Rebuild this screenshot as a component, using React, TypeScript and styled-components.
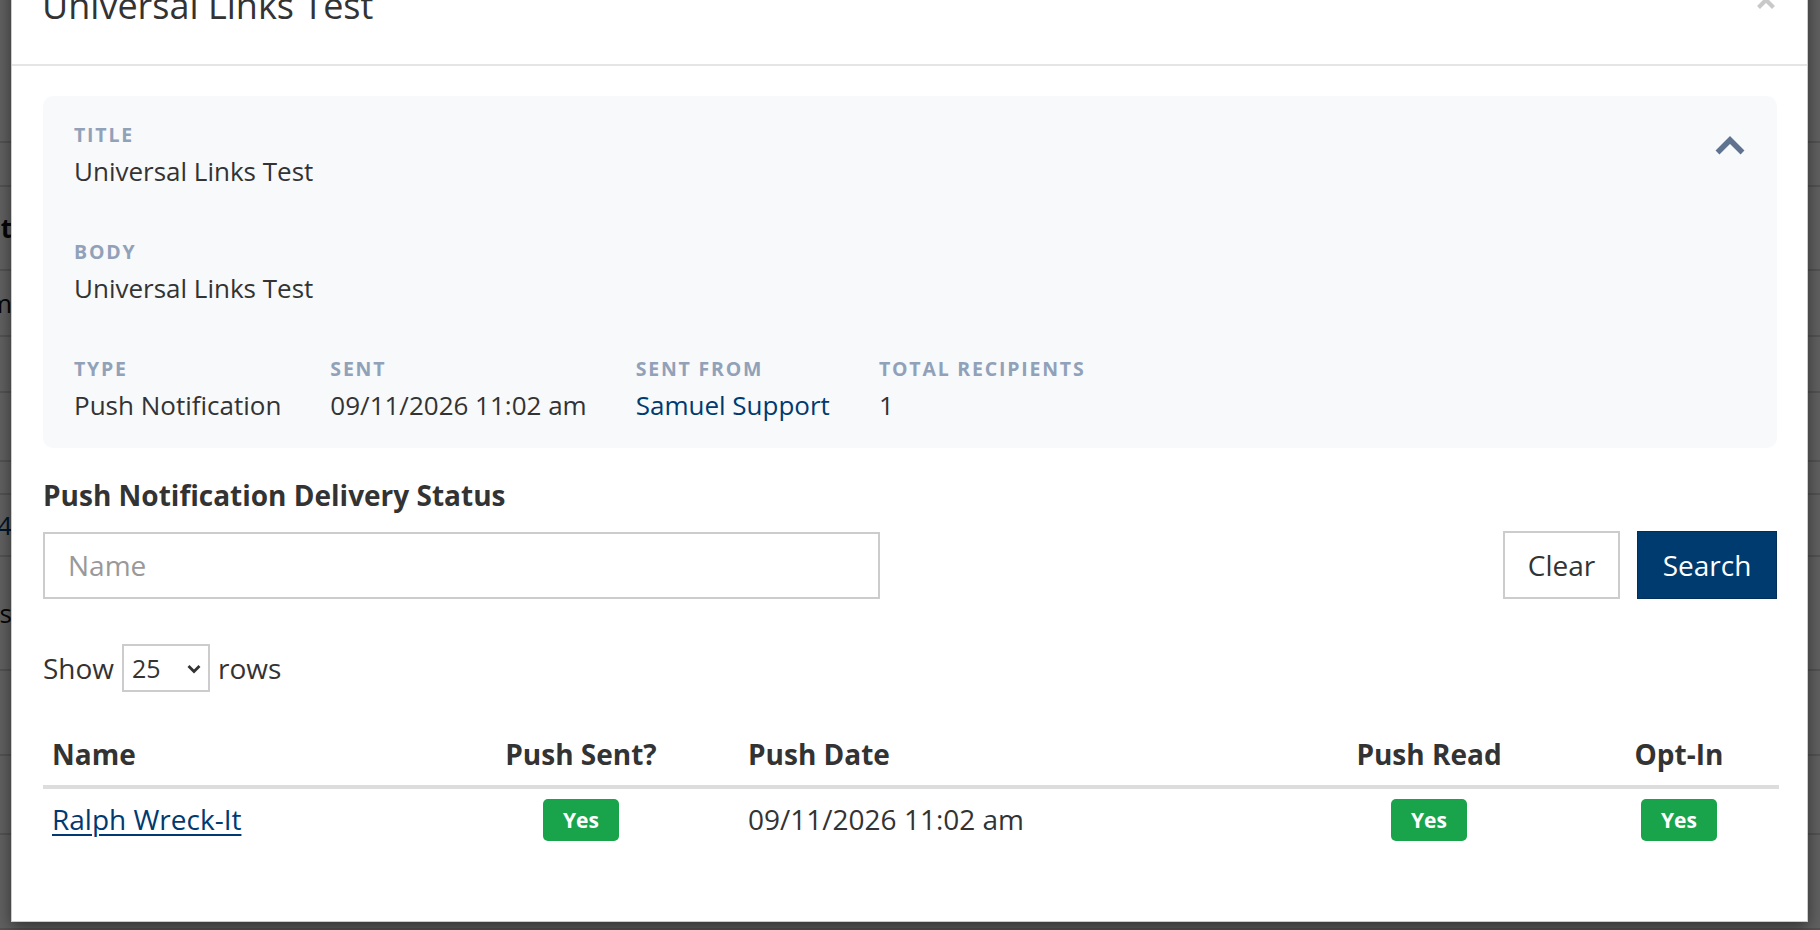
import styled, { createGlobalStyle } from 'styled-components';

const GlobalStyle = createGlobalStyle`
    html, body {
        margin: 0;
        padding: 0;
        overflow: hidden;
    }
    body {
        font-family: "Open Sans", "Liberation Sans", sans-serif;
        color: #333;
    }
    * {
        box-sizing: border-box;
    }
`;

// rows of the page that sits behind the modal backdrop
const behindRows = [
    { h: 143, text: '' },
    { h: 44, text: '' },
    { h: 84, text: 'Format', bold: true },
    { h: 66, text: 'Form' },
    { h: 56, text: '' },
    { h: 69, text: '' },
    { h: 33, text: '' },
    { h: 62, text: '2024', link: true },
    { h: 114, text: 'Yes' },
    { h: 85, text: '' },
    { h: 79, text: '' },
    { h: 95, text: '' },
];

const deliveries = [
    { name: 'Ralph Wreck-It', sent: true, date: '09/11/2026 11:02 am', read: true, optIn: true },
];

const ChevronUp = () => (
    <svg width="30" height="20" viewBox="0 0 30 20">
        <path d="M2.5 17.5 L15 5 L27.5 17.5" fill="none" stroke="#5f7390" strokeWidth="5.5" strokeLinejoin="miter" />
    </svg>
);

const ChevronDown = () => (
    <svg width="14" height="10" viewBox="0 0 14 10">
        <path d="M1.5 2 L7 7.5 L12.5 2" fill="none" stroke="#333" strokeWidth="2.8" />
    </svg>
);

const CloseIcon = () => (
    <svg width="18" height="18" viewBox="0 0 18 18">
        <path d="M1.5 1.5 L16.5 16.5 M16.5 1.5 L1.5 16.5" stroke="#c9c9c9" strokeWidth="4.2" />
    </svg>
);

const App = () => {
    return (
        <>
            <GlobalStyle />
            <Screen>
                <BehindPage>
                    {behindRows.map((row, i) => (
                        <BehindRow key={i} style={{ height: row.h }}>
                            <BehindCell>
                                <BehindText $bold={row.bold} $link={row.link}>{row.text}</BehindText>
                            </BehindCell>
                        </BehindRow>
                    ))}
                </BehindPage>
                <Backdrop />
                <ModalLayer>
                    <Modal>
                        <ModalHeader>
                            <ModalTitle>Universal Links Test</ModalTitle>
                            <CloseButton aria-label="Close">
                                <CloseIcon />
                            </CloseButton>
                        </ModalHeader>
                        <ModalBody>
                            <InfoBox>
                                <Fields>
                                    <Field>
                                        <FieldLabel>Title</FieldLabel>
                                        <FieldValue>Universal Links Test</FieldValue>
                                    </Field>
                                    <Field>
                                        <FieldLabel>Body</FieldLabel>
                                        <FieldValue>Universal Links Test</FieldValue>
                                    </Field>
                                    <MetaRow>
                                        <Field>
                                            <FieldLabel>Type</FieldLabel>
                                            <FieldValue>Push Notification</FieldValue>
                                        </Field>
                                        <Field>
                                            <FieldLabel>Sent</FieldLabel>
                                            <FieldValue>09/11/2026 11:02 am</FieldValue>
                                        </Field>
                                        <Field>
                                            <FieldLabel>Sent From</FieldLabel>
                                            <FieldValue>
                                                <UserLink href="#">Samuel Support</UserLink>
                                            </FieldValue>
                                        </Field>
                                        <Field>
                                            <FieldLabel>Total Recipients</FieldLabel>
                                            <FieldValue>1</FieldValue>
                                        </Field>
                                    </MetaRow>
                                </Fields>
                                <ToggleButton aria-label="Collapse">
                                    <ChevronUp />
                                </ToggleButton>
                            </InfoBox>

                            <SectionTitle>Push Notification Delivery Status</SectionTitle>

                            <SearchRow>
                                <NameInput placeholder="Name" />
                                <ButtonGroup>
                                    <ClearButton>Clear</ClearButton>
                                    <SearchButton>Search</SearchButton>
                                </ButtonGroup>
                            </SearchRow>

                            <ShowRow>
                                <span>Show</span>
                                <SelectWrap>
                                    <RowsSelect defaultValue="25">
                                        <option value="10">10</option>
                                        <option value="25">25</option>
                                        <option value="50">50</option>
                                        <option value="100">100</option>
                                    </RowsSelect>
                                    <SelectArrow>
                                        <ChevronDown />
                                    </SelectArrow>
                                </SelectWrap>
                                <span>rows</span>
                            </ShowRow>

                            <StatusTable>
                                <colgroup>
                                    <col style={{ width: 380 }} />
                                    <col style={{ width: 316 }} />
                                    <col style={{ width: 540 }} />
                                    <col style={{ width: 300 }} />
                                    <col style={{ width: 200 }} />
                                </colgroup>
                                <thead>
                                    <tr>
                                        <Th>Name</Th>
                                        <Th $center>Push Sent?</Th>
                                        <Th>Push Date</Th>
                                        <Th $center>Push Read</Th>
                                        <Th $center>Opt-In</Th>
                                    </tr>
                                </thead>
                                <tbody>
                                    {deliveries.map((d) => (
                                        <tr key={d.name}>
                                            <Td>
                                                <NameLink href="#">{d.name}</NameLink>
                                            </Td>
                                            <Td $center>{d.sent && <Badge>Yes</Badge>}</Td>
                                            <Td>{d.date}</Td>
                                            <Td $center>{d.read && <Badge>Yes</Badge>}</Td>
                                            <Td $center>{d.optIn && <Badge>Yes</Badge>}</Td>
                                        </tr>
                                    ))}
                                </tbody>
                            </StatusTable>
                        </ModalBody>
                    </Modal>
                </ModalLayer>
            </Screen>
        </>
    );
};

const Screen = styled.div`
    position: relative;
    width: 100vw;
    height: 100vh;
    overflow: hidden;
    background-color: #fff;
`;

const BehindPage = styled.div`
    display: flex;
    flex-direction: column;
`;

const BehindRow = styled.div`
    display: flex;
    align-items: center;
    border-bottom: 2px solid #d9d9d9;
`;

const BehindCell = styled.div`
    width: 12px;
    display: flex;
    justify-content: flex-end;
    white-space: nowrap;
`;

const BehindText = styled.span<{ $bold?: boolean; $link?: boolean }>`
    flex-shrink: 0;
    font-size: 26px;
    font-weight: ${(p) => (p.$bold ? 700 : 400)};
    color: ${(p) => (p.$link ? '#003a70' : '#111')};
`;

const Backdrop = styled.div`
    position: absolute;
    inset: 0;
    background-color: rgba(0, 0, 0, 0.62);
`;

const ModalLayer = styled.div`
    position: absolute;
    inset: 0;
    padding: 0 12px 0 11px;
`;

const Modal = styled.div`
    margin-top: -30px;
    height: 952px;
    background-color: #fff;
    border: 1px solid rgba(0, 0, 0, 0.2);
    box-shadow: 0 5px 15px rgba(0, 0, 0, 0.5);
    display: flex;
    flex-direction: column;
`;

const ModalHeader = styled.div`
    display: flex;
    justify-content: space-between;
    align-items: flex-end;
    padding: 13px 32px 36px 30px;
    border-bottom: 2px solid #e5e5e5;
`;

const ModalTitle = styled.h4`
    margin: 0;
    font-size: 36px;
    line-height: 44px;
    font-weight: 400;
    color: #333;
`;

const CloseButton = styled.button`
    align-self: flex-start;
    margin-top: 7px;
    padding: 0;
    border: none;
    background: none;
    line-height: 0;
    cursor: pointer;
`;

const ModalBody = styled.div`
    padding: 30px 30px 0 31px;
`;

const InfoBox = styled.div`
    display: flex;
    align-items: flex-start;
    background-color: #f7f9fb;
    border-radius: 10px;
    padding: 24px 32px 25px 31px;
`;

const Fields = styled.div`
    flex: 1;
    display: flex;
    flex-direction: column;
    gap: 48px;
`;

const MetaRow = styled.div`
    display: flex;
    gap: 49px;
`;

const Field = styled.div`
    display: flex;
    flex-direction: column;
    gap: 3px;
`;

const FieldLabel = styled.div`
    font-size: 19.5px;
    line-height: 30px;
    font-weight: 700;
    text-transform: uppercase;
    letter-spacing: 1.8px;
    color: #91a1b8;
`;

const FieldValue = styled.div`
    font-size: 26px;
    line-height: 36px;
    color: #333;
`;

const UserLink = styled.a`
    color: #003a70;
    text-decoration: none;
`;

const ToggleButton = styled.button`
    margin-top: 15px;
    padding: 0;
    border: none;
    background: none;
    line-height: 0;
    cursor: pointer;
`;

const SectionTitle = styled.h3`
    margin: 30px 0 0;
    font-size: 28px;
    line-height: 34px;
    font-weight: 700;
    color: #333;
`;

const SearchRow = styled.div`
    margin-top: 19px;
    display: flex;
    justify-content: space-between;
    align-items: center;
`;

const NameInput = styled.input`
    width: 837px;
    height: 67px;
    padding: 0 23px;
    border: 2px solid #ccc;
    border-radius: 0;
    font-family: inherit;
    font-size: 28px;
    color: #333;
    outline: none;

    &::placeholder {
        color: #999;
    }
`;

const ButtonGroup = styled.div`
    display: flex;
    gap: 17px;
`;

const ClearButton = styled.button`
    width: 117px;
    height: 68px;
    border: 2px solid #ccc;
    background-color: #fff;
    font-family: inherit;
    font-size: 28px;
    color: #333;
    cursor: pointer;
`;

const SearchButton = styled.button`
    width: 140px;
    height: 68px;
    border: 1px solid #002f5a;
    background-color: #003b6f;
    font-family: inherit;
    font-size: 28px;
    color: #fff;
    cursor: pointer;
`;

const ShowRow = styled.div`
    margin-top: 45px;
    display: flex;
    align-items: center;
    gap: 8px;
    font-size: 28px;
    line-height: 36px;
    color: #333;
`;

const SelectWrap = styled.div`
    position: relative;
    width: 88px;
    height: 48px;
`;

const RowsSelect = styled.select`
    appearance: none;
    width: 100%;
    height: 100%;
    padding: 0 0 0 8px;
    border: 2px solid #ccc;
    border-radius: 0;
    background-color: #fff;
    font-family: inherit;
    font-size: 25px;
    color: #333;
`;

const SelectArrow = styled.span`
    position: absolute;
    right: 9px;
    top: 19px;
    line-height: 0;
    pointer-events: none;
`;

const StatusTable = styled.table`
    margin-top: 32px;
    width: 100%;
    border-collapse: collapse;
    table-layout: fixed;
`;

const Th = styled.th<{ $center?: boolean }>`
    padding: 12px 9px 13px;
    border-bottom: 4px solid #ddd;
    font-size: 28px;
    line-height: 36px;
    font-weight: 700;
    color: #333;
    text-align: ${(p) => (p.$center ? 'center' : 'left')};
`;

const Td = styled.td<{ $center?: boolean }>`
    padding: 9px 9px;
    font-size: 28px;
    line-height: 36px;
    color: #333;
    vertical-align: middle;
    text-align: ${(p) => (p.$center ? 'center' : 'left')};
`;

const NameLink = styled.a`
    color: #003a70;
    text-decoration: underline;
    text-underline-offset: 4px;
`;

const Badge = styled.span`
    display: inline-flex;
    align-items: center;
    justify-content: center;
    height: 42px;
    padding: 0 20px;
    border-radius: 5px;
    background-color: #19a34b;
    font-size: 21px;
    font-weight: 700;
    color: #fff;
    vertical-align: middle;
`;

export default App;
